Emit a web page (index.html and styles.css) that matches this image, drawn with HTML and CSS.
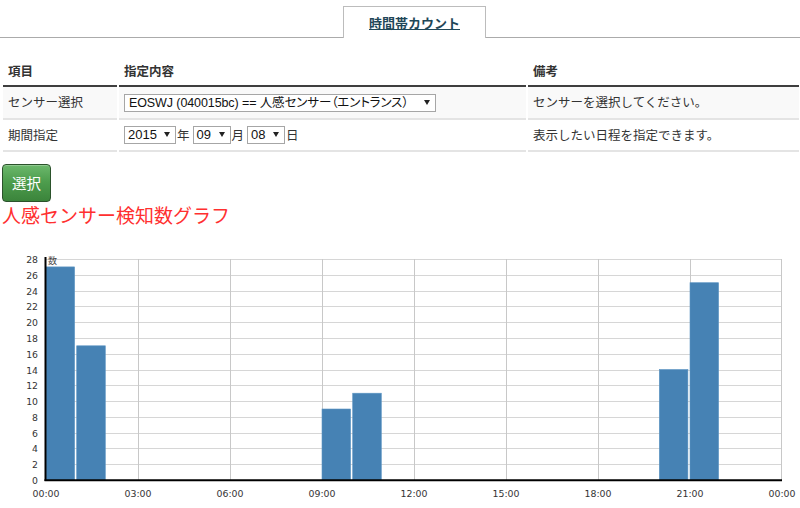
FILE: index.html
```html
<!DOCTYPE html>
<html lang="ja">
<head>
<meta charset="utf-8">
<title>時間帯カウント</title>
<link rel="stylesheet" href="styles.css">
</head>
<body>
<nav class="tabs">
  <div class="tab"><a class="tab-link" href="#">時間帯カウント</a></div>
</nav>

<table class="form-table">
  <colgroup>
    <col class="c1"><col class="c2"><col class="c3">
  </colgroup>
  <thead>
    <tr><th>項目</th><th>指定内容</th><th>備考</th></tr>
  </thead>
  <tbody>
    <tr class="odd">
      <td class="jp">センサー選択</td>
      <td><span class="sel sel-sensor"><span class="sel-text">EOSWJ (040015bc) == <span class="kana">人感センサー（エントランス）</span></span><span class="arrow"></span></span></td>
      <td class="jp">センサーを選択してください。</td>
    </tr>
    <tr>
      <td class="jp">期間指定</td>
      <td>
        <div class="date-row">
          <span class="sel sel-year"><span class="sel-text">2015</span><span class="arrow"></span></span><span class="unit">年</span><span class="sel sel-md"><span class="sel-text">09</span><span class="arrow"></span></span><span class="unit">月</span><span class="sel sel-md"><span class="sel-text">08</span><span class="arrow"></span></span><span class="unit">日</span>
        </div>
      </td>
      <td class="jp">表示したい日程を指定できます。</td>
    </tr>
  </tbody>
</table>

<button class="btn-select" type="button">選択</button>
<div class="graph-title">人感センサー検知数グラフ</div>

<svg class="chart" width="800" height="263" viewBox="0 245 800 263" xmlns="http://www.w3.org/2000/svg">
  <g class="grid-h" stroke="#d6d6d6" stroke-width="1">
    <line x1="46" y1="258.5" x2="782" y2="258.5"/>
    <line x1="46" y1="274.5" x2="782" y2="274.5"/>
    <line x1="46" y1="290.5" x2="782" y2="290.5"/>
    <line x1="46" y1="305.5" x2="782" y2="305.5"/>
    <line x1="46" y1="321.5" x2="782" y2="321.5"/>
    <line x1="46" y1="337.5" x2="782" y2="337.5"/>
    <line x1="46" y1="353.5" x2="782" y2="353.5"/>
    <line x1="46" y1="369.5" x2="782" y2="369.5"/>
    <line x1="46" y1="384.5" x2="782" y2="384.5"/>
    <line x1="46" y1="400.5" x2="782" y2="400.5"/>
    <line x1="46" y1="416.5" x2="782" y2="416.5"/>
    <line x1="46" y1="432.5" x2="782" y2="432.5"/>
    <line x1="46" y1="447.5" x2="782" y2="447.5"/>
    <line x1="46" y1="463.5" x2="782" y2="463.5"/>
  </g>
  <g class="grid-v" stroke="#c8c8c8" stroke-width="1">
    <line x1="138.5" y1="258" x2="138.5" y2="479"/>
    <line x1="230.5" y1="258" x2="230.5" y2="479"/>
    <line x1="322.5" y1="258" x2="322.5" y2="479"/>
    <line x1="414.5" y1="258" x2="414.5" y2="479"/>
    <line x1="506.5" y1="258" x2="506.5" y2="479"/>
    <line x1="598.5" y1="258" x2="598.5" y2="479"/>
    <line x1="690.5" y1="258" x2="690.5" y2="479"/>
    <line x1="781.5" y1="258" x2="781.5" y2="479"/>
  </g>
  <text x="48" y="263" font-family="Noto Sans CJK JP, sans-serif" font-size="9" fill="#444">数</text>
  <g class="bars" fill="#4682b4" stroke="#5d95c4" stroke-width="0.6">
    <rect x="46" y="265.9" width="28.6" height="213.1"/>
    <rect x="76.7" y="344.8" width="28.6" height="134.2"/>
    <rect x="322" y="408" width="28.6" height="71"/>
    <rect x="352.7" y="392.2" width="28.6" height="86.8"/>
    <rect x="659.3" y="368.5" width="28.6" height="110.5"/>
    <rect x="690" y="281.7" width="28.6" height="197.3"/>
  </g>
  <line x1="45.5" y1="256" x2="45.5" y2="480" stroke="#000" stroke-width="2"/>
  <line x1="44.5" y1="479.3" x2="782" y2="479.3" stroke="#000" stroke-width="2"/>
  <g class="ylabels" font-family="DejaVu Sans, sans-serif" font-size="9.3" fill="#333" text-anchor="end" dominant-baseline="central">
    <text x="38" y="258">28</text>
    <text x="38" y="274">26</text>
    <text x="38" y="290">24</text>
    <text x="38" y="305">22</text>
    <text x="38" y="321">20</text>
    <text x="38" y="337">18</text>
    <text x="38" y="353">16</text>
    <text x="38" y="369">14</text>
    <text x="38" y="384">12</text>
    <text x="38" y="400">10</text>
    <text x="38" y="416">8</text>
    <text x="38" y="432">6</text>
    <text x="38" y="447">4</text>
    <text x="38" y="463">2</text>
    <text x="38" y="479">0</text>
  </g>
  <g class="xlabels" font-family="DejaVu Sans, sans-serif" font-size="9.4" fill="#333" text-anchor="middle" dominant-baseline="central">
    <text x="46" y="492">00:00</text>
    <text x="138" y="492">03:00</text>
    <text x="230" y="492">06:00</text>
    <text x="322" y="492">09:00</text>
    <text x="414" y="492">12:00</text>
    <text x="506" y="492">15:00</text>
    <text x="598" y="492">18:00</text>
    <text x="690" y="492">21:00</text>
    <text x="782" y="492">00:00</text>
  </g>
</svg>
</body>
</html>
```

FILE: styles.css
```css
* {
  box-sizing: border-box;
}

html,
body {
  margin: 0;
  padding: 0;
  background: #fff;
}

body {
  width: 800px;
  height: 508px;
  overflow: hidden;
  font-family: "Liberation Sans", "Noto Sans CJK JP", sans-serif;
  font-size: 13px;
  color: #333;
}

/* Tabs */
.tabs {
  display: flex;
  height: 38px;
  padding-top: 6px;
  border-bottom: 1px solid #ababab;
}

.tab {
  margin-left: 343px;
  width: 143px;
  height: 32px;
  margin-bottom: -1px;
  border: 1px solid #bcbcbc;
  border-bottom: none;
  background: #fff;
  display: flex;
  align-items: center;
  justify-content: center;
}

.tab-link {
  font-family: "Noto Sans CJK JP", sans-serif;
  font-size: 13px;
  font-weight: bold;
  line-height: 16px;
  color: #1f4758;
  text-decoration: underline;
  padding-top: 1px;
}

/* Form table */
.form-table {
  margin: 19px 0 0 1px;
  width: 800px;
  table-layout: fixed;
  border-collapse: separate;
  border-spacing: 2px 0;
}

.c1 {
  width: 114px;
}

.c2 {
  width: 407px;
}

.form-table th {
  text-align: left;
  font-family: "Noto Sans CJK JP", sans-serif;
  font-size: 12.5px;
  font-weight: bold;
  line-height: 18px;
  padding: 5px 5px;
  border-bottom: 2px solid #3e3e3e;
  color: #333;
}

.form-table td {
  line-height: 18px;
  padding: 6px 5px;
  border-bottom: 2px solid #e4e4e4;
  vertical-align: middle;
  white-space: nowrap;
}

.form-table tr.odd td {
  background: #f9f9f9;
}

.form-table td.jp {
  font-family: "Noto Sans CJK JP", sans-serif;
  font-size: 12.5px;
}

/* Fake selects */
.sel {
  display: inline-flex;
  align-items: center;
  justify-content: space-between;
  height: 18px;
  padding: 0 5px 0 4px;
  border: 1px solid #a6a6a6;
  background: #fff;
  color: #111;
  font-size: 13px;
  line-height: 16px;
  vertical-align: middle;
}

.sel-sensor {
  width: 312px;
}

.sel-sensor .sel-text {
  font-size: 12.5px;
  letter-spacing: -0.1px;
}

.sel-sensor .kana {
  font-feature-settings: "palt";
}

.sel-year {
  width: 52px;
  padding-left: 3px;
}

.sel-md {
  width: 38px;
  padding-left: 3px;
}

.arrow {
  width: 0;
  height: 0;
  border-left: 3px solid transparent;
  border-right: 3px solid transparent;
  border-top: 5px solid #222;
}

.date-row {
  display: flex;
  align-items: center;
  height: 18px;
}

.date-row .sel {
  margin-right: 1px;
}

.unit {
  font-family: "Noto Sans CJK JP", sans-serif;
  font-size: 12.5px;
  margin-right: 3px;
  color: #333;
}

/* Button */
.btn-select {
  display: block;
  margin: 12px 0 0 2px;
  width: 49px;
  height: 38px;
  padding: 0;
  border: 1px solid #2b522b;
  border-radius: 4px;
  background: linear-gradient(to bottom, #6cb86c 0%, #4e9e4e 45%, #3b843b 100%);
  box-shadow: inset 0 1px 0 rgba(255, 255, 255, 0.25);
  color: #fff;
  font-family: "Noto Sans CJK JP", sans-serif;
  font-size: 14.5px;
  line-height: 20px;
}

/* Graph title */
.graph-title {
  margin: 1px 0 0 2px;
  font-family: "Noto Sans CJK JP", sans-serif;
  font-size: 19px;
  line-height: 24px;
  color: #ff3030;
}

/* Chart */
.chart {
  display: block;
  margin-top: 19px;
}
```
